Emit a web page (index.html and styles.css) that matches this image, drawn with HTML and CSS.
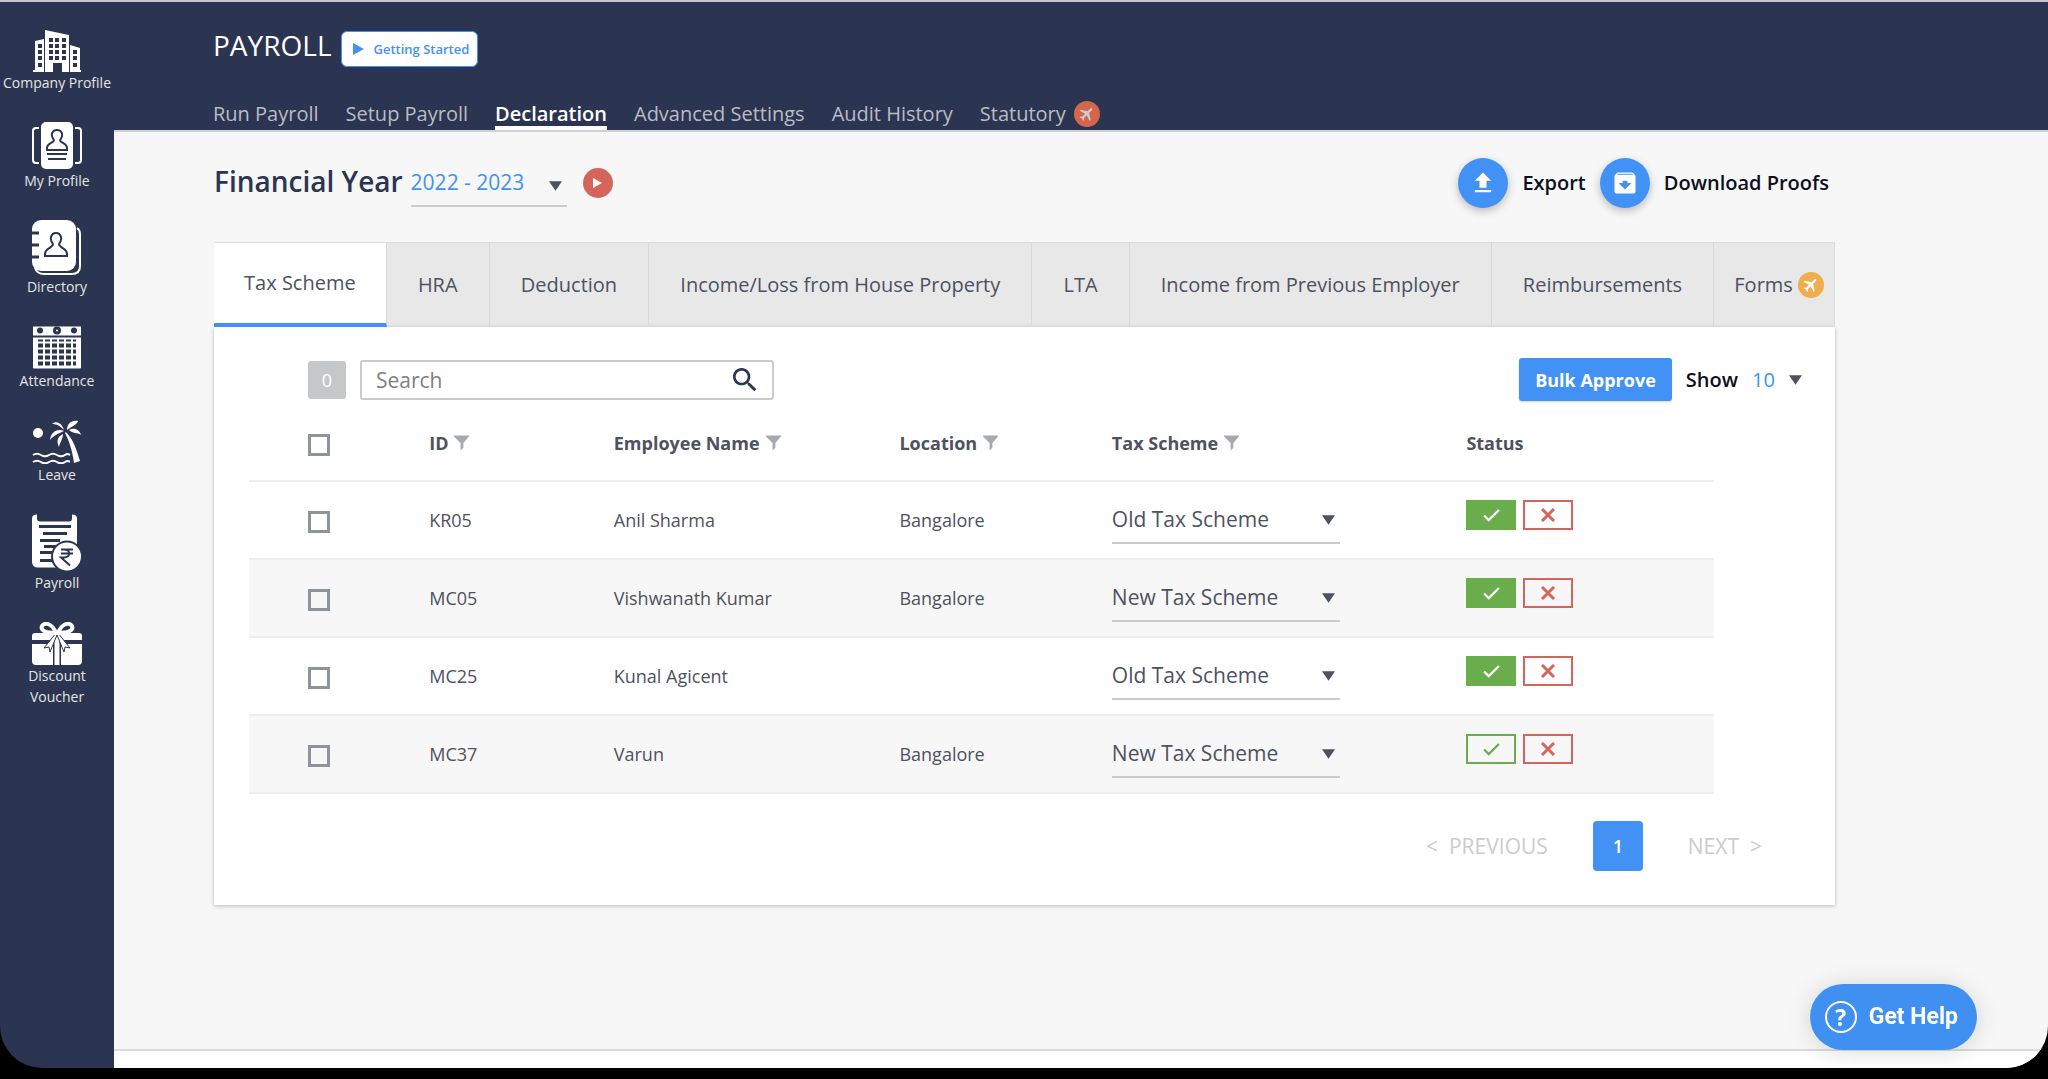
FILE: index.html
```html
<!DOCTYPE html>
<html lang="en">
<head>
<meta charset="utf-8">
<title>Payroll</title>
<link rel="stylesheet" href="styles.css">
</head>
<body>
<svg class="sprite" aria-hidden="true">
  <symbol id="plane" viewBox="0 0 24 24"><path transform="rotate(45 12 12)" d="M21 16v-2l-8-5V3.500c0-.83-.67-1.500-1.500-1.500S10 2.670 10 3.500V9l-8 5v2l8-2.500V19l-2 1.500V22l3.500-1 3.500 1v-1.500L13 19v-5.500l8 2.500z"/></symbol>
  <symbol id="funnel" viewBox="0 0 16 16"><path d="M0 0h16v1l-6 7v5l-3 3V8L0 1z"/></symbol>
  <symbol id="caret" viewBox="0 0 14 10"><path d="M0 0h14L7 10z"/></symbol>
  <symbol id="check" viewBox="0 0 18 14"><path d="M1 7l5 5L17 1" fill="none" stroke="currentColor" stroke-width="2.400"/></symbol>
  <symbol id="cross" viewBox="0 0 14 14"><path d="M1 1l12 12M13 1L1 13" fill="none" stroke="currentColor" stroke-width="3"/></symbol>
</svg>
<div class="window">
  <nav class="sidebar" aria-label="Modules">
    <a href="#" class="module">
      <svg width="48" height="42" viewBox="0 0 48 42"><path fill="#fff" d="M0 42v-2h2V11l9-2v33zM12 0l24 5v37h-7v-9h-9v9h-8zM37 15l10 3v22h1v2H37z"/><g fill="#2b3551"><path d="M5 14h4v4H5zM5 20h4v4H5zM5 26h4v4H5zM5 33h4v4H5zM16 8h4v4h-4zM22 8h4v4h-4zM29 8h4v4h-4zM16 14h4v4h-4zM22 14h4v4h-4zM29 14h4v4h-4zM16 20h4v4h-4zM22 20h4v4h-4zM29 20h4v4h-4zM16 26h4v4h-4zM22 26h4v4h-4zM29 26h4v4h-4zM40 20h4v4h-4zM40 26h4v4h-4zM40 33h4v4h-4z"/></g></svg>
      <span>Company Profile</span>
    </a>
    <a href="#" class="module">
      <svg width="50" height="48" viewBox="0 0 50 48"><path d="M7 6H4q-3 0-3 3v29q0 3 3 3h3M43 6h3q3 0 3 3v29q0 3-3 3h-3" fill="none" stroke="#fff" stroke-width="2"/><rect x="9" y="0" width="32" height="47" rx="5" fill="#fff"/><g fill="none" stroke="#2b3551" stroke-width="2"><path d="M22 18c-4-5-2-10 3-10s7 5 3 10c0 3 7 3 7 8v2H15v-2c0-5 7-5 7-8z"/><path d="M15 32h20M16 37h18"/></g></svg>
      <span>My Profile</span>
    </a>
    <a href="#" class="module">
      <svg width="50" height="56" viewBox="0 0 50 56"><path d="M45 8q3 2 3 6v32q0 8-8 8H12q-7 0-9-6" fill="none" stroke="#fff" stroke-width="2"/><rect width="44" height="51" rx="9" fill="#fff"/><path d="M0 13h7M0 25h7M0 37h7" stroke="#2b3551" stroke-width="3"/><path d="M21 24c-4-5-2-11 3-11s7 6 3 11c0 4 8 4 8 10v2H13v-2c0-6 8-6 8-10z" fill="none" stroke="#2b3551" stroke-width="2"/></svg>
      <span>Directory</span>
    </a>
    <a href="#" class="module">
      <svg width="50" height="44" viewBox="0 0 50 43"><path fill="#fff" d="M1 0h48v9H1zM1 11h48v30q0 1-1 1H2q-1 0-1-1z"/><g fill="#2b3551"><circle cx="8" cy="4" r="3"/><circle cx="25" cy="4" r="4"/><circle cx="42" cy="4" r="3"/></g><circle cx="25" cy="4" r="1" fill="#fff"/><path d="M6 14h38" stroke="#2b3551" stroke-width="2" stroke-dasharray="5 2"/><path d="M6 19h38M6 25h38M6 31h38M6 37h38" stroke="#2b3551" stroke-width="4" stroke-dasharray="5 2"/></svg>
      <span>Attendance</span>
    </a>
    <a href="#" class="module">
      <svg width="50" height="44" viewBox="0 0 50 44"><g fill="#fff"><circle cx="6" cy="13" r="5"/><path d="M34 12c4 5 8 8 14 29l-6 2c-2-14-5-22-9-30z"/><path d="M32 10C30 3 24 0 20 4c5 0 8 2 12 6zM32 11c-7-3-13 1-14 9 4-5 8-6 14-9zM31 14c-5 2-7 7-4 13 1-5 4-8 4-13zM35 10c0-6 4-10 11-9-1 4-6 5-11 9zM37 10c5-3 11 0 12 5-4-3-8-1-12-5z"/></g><path d="M1 35c3-2 5-2 8 0s5 2 8 0 5-2 8 0 5 2 8 0 3-1 5 0M1 42c3-2 5-2 8 0s5 2 8 0 5-2 8 0 5 2 8 0 3-1 5 0" fill="none" stroke="#fff" stroke-width="2"/></svg>
      <span>Leave</span>
    </a>
    <a href="#" class="module">
      <svg width="50" height="58" viewBox="0 0 50 57"><path fill="#fff" d="M0 4q0-4 5-4v4q0 3 3 3h29q3 0 3-3V0q5 0 5 4v40H30v9H6q-6 0-6-6z"/><path d="M7 12h32M11 19h24M8 26h20M12 32h14M8 38h14M8 46h14" stroke="#2b3551" stroke-width="3"/><circle cx="35" cy="42" r="15" fill="#fff" stroke="#2b3551" stroke-width="2"/><path d="M29 35h12M29 39h12M29 35h3c7 0 7 8 0 8h-3l9 8" fill="none" stroke="#2b3551" stroke-width="2"/></svg>
      <span>Payroll</span>
    </a>
    <a href="#" class="module">
      <svg width="50" height="43" viewBox="0 0 50 43"><path fill="#fff" d="M0 18v-4q0-3 3-3h44q3 0 3 3v4zM0 22h50v17q0 4-4 4H4q-4 0-4-4z"/><path d="M25 14v30" stroke="#2b3551" stroke-width="8"/><path d="M25 12v31" stroke="#fff" stroke-width="5"/><path d="M24 11l-12 15 5-1 1 5 7-17zM26 11l12 15-5-1-1 5-7-17z" fill="#fff" stroke="#2b3551"/><path d="M24 11C20 1 13 0 10 4c-2 5 5 7 14 7zM26 11C30 1 37 0 40 4c2 5-5 7-14 7z" fill="#2b3551" stroke="#fff" stroke-width="4"/></svg>
      <span>Discount Voucher</span>
    </a>
  </nav>
  <div class="main">
    <header class="header">
      <div class="title-row">
        <h1>PAYROLL</h1>
        <button type="button" class="getting-started"><svg width="11" height="12" viewBox="0 0 11 12"><path d="M0 0l11 6-11 6z" fill="currentColor"/></svg>Getting Started</button>
      </div>
      <nav class="subnav" aria-label="Payroll">
        <a href="#">Run Payroll</a>
        <a href="#">Setup Payroll</a>
        <a href="#" class="current">Declaration</a>
        <a href="#">Advanced Settings</a>
        <a href="#">Audit History</a>
        <a href="#">Statutory<span class="plane-badge"><svg width="18" height="18"><use href="#plane"/></svg></span></a>
      </nav>
    </header>
    <main class="content">
      <div class="year-row">
        <label class="year-label" for="year">Financial Year</label>
        <span class="select year-select"><select id="year"><option>2022 - 2023</option></select><svg width="13" height="10"><use href="#caret"/></svg></span>
        <button type="button" class="play" aria-label="Play video"><svg width="9" height="10" viewBox="0 0 9 10"><path d="M0 0l9 5-9 5z" fill="#fff"/></svg></button>
        <div class="actions">
          <button type="button" class="action"><span class="round"><svg width="28" height="28" viewBox="0 0 24 24"><path d="M9 16h6v-6h4l-7-7-7 7h4zM5 18h14v2H5z"/></svg></span>Export</button>
          <button type="button" class="action"><span class="round"><svg width="28" height="28" viewBox="0 0 24 24"><path d="M20.540 5.230l-1.390-1.680C18.880 3.210 18.470 3 18 3H6c-.47 0-.88.21-1.160.55L3.460 5.230C3.170 5.570 3 6.020 3 6.500V19c0 1.100.9 2 2 2h14c1.100 0 2-.9 2-2V6.500c0-.48-.17-.93-.46-1.270zM12 17.500L6.500 12H10v-2h4v2h3.500L12 17.500zM5.120 5l.81-1h12l.94 1H5.120z"/></svg></span>Download Proofs</button>
        </div>
      </div>
      <div class="tabs">
        <button type="button" class="tab active">Tax Scheme</button>
        <button type="button" class="tab">HRA</button>
        <button type="button" class="tab">Deduction</button>
        <button type="button" class="tab">Income/Loss from House Property</button>
        <button type="button" class="tab">LTA</button>
        <button type="button" class="tab">Income from Previous Employer</button>
        <button type="button" class="tab">Reimbursements</button>
        <button type="button" class="tab forms">Forms<span class="plane-badge amber"><svg width="18" height="18"><use href="#plane"/></svg></span></button>
      </div>
      <section class="card">
        <div class="toolbar">
          <span class="count">0</span>
          <div class="search">
            <input type="search" placeholder="Search" aria-label="Search">
            <button type="button" aria-label="Search"><svg width="32" height="32" viewBox="0 0 24 24"><path d="M15.500 14h-.79l-.28-.27C15.410 12.590 16 11.110 16 9.500 16 5.910 13.090 3 9.500 3S3 5.910 3 9.500 5.910 16 9.500 16c1.610 0 3.090-.59 4.230-1.570l.27.28v.79l5 4.990L20.490 19l-4.990-5zm-6 0C7.010 14 5 11.990 5 9.500S7.010 5 9.500 5 14 7.010 14 9.500 11.990 14 9.500 14z"/></svg></button>
          </div>
          <button type="button" class="bulk">Bulk Approve</button>
          <label class="show" for="show">Show</label>
          <span class="select show-select"><select id="show"><option>10</option></select><svg width="13" height="10"><use href="#caret"/></svg></span>
        </div>
        <table class="declarations">
          <colgroup><col class="c-check"><col class="c-id"><col class="c-name"><col class="c-location"><col class="c-scheme"><col class="c-status"></colgroup>
          <thead>
            <tr>
              <th class="tick"><input type="checkbox" aria-label="Select all"></th>
              <th>ID<button type="button" class="filter" aria-label="Filter ID"><svg width="15" height="16"><use href="#funnel"/></svg></button></th>
              <th>Employee Name<button type="button" class="filter" aria-label="Filter name"><svg width="15" height="16"><use href="#funnel"/></svg></button></th>
              <th>Location<button type="button" class="filter" aria-label="Filter location"><svg width="15" height="16"><use href="#funnel"/></svg></button></th>
              <th>Tax Scheme<button type="button" class="filter" aria-label="Filter tax scheme"><svg width="15" height="16"><use href="#funnel"/></svg></button></th>
              <th>Status</th>
            </tr>
          </thead>
          <tbody>
            <tr>
              <td class="tick"><input type="checkbox" aria-label="Select KR05"></td>
              <td>KR05</td><td>Anil Sharma</td><td>Bangalore</td>
              <td><span class="select scheme"><select aria-label="Tax scheme of Anil Sharma"><option>Old Tax Scheme</option></select><svg width="13" height="10"><use href="#caret"/></svg></span></td>
              <td class="status"><div class="decide"><button type="button" class="approve on" aria-label="Approve"><svg width="17" height="13"><use href="#check"/></svg></button><button type="button" class="reject" aria-label="Reject"><svg width="14" height="14"><use href="#cross"/></svg></button></div></td>
            </tr>
            <tr>
              <td class="tick"><input type="checkbox" aria-label="Select MC05"></td>
              <td>MC05</td><td>Vishwanath Kumar</td><td>Bangalore</td>
              <td><span class="select scheme"><select aria-label="Tax scheme of Vishwanath Kumar"><option>New Tax Scheme</option></select><svg width="13" height="10"><use href="#caret"/></svg></span></td>
              <td class="status"><div class="decide"><button type="button" class="approve on" aria-label="Approve"><svg width="17" height="13"><use href="#check"/></svg></button><button type="button" class="reject" aria-label="Reject"><svg width="14" height="14"><use href="#cross"/></svg></button></div></td>
            </tr>
            <tr>
              <td class="tick"><input type="checkbox" aria-label="Select MC25"></td>
              <td>MC25</td><td>Kunal Agicent</td><td></td>
              <td><span class="select scheme"><select aria-label="Tax scheme of Kunal Agicent"><option>Old Tax Scheme</option></select><svg width="13" height="10"><use href="#caret"/></svg></span></td>
              <td class="status"><div class="decide"><button type="button" class="approve on" aria-label="Approve"><svg width="17" height="13"><use href="#check"/></svg></button><button type="button" class="reject" aria-label="Reject"><svg width="14" height="14"><use href="#cross"/></svg></button></div></td>
            </tr>
            <tr>
              <td class="tick"><input type="checkbox" aria-label="Select MC37"></td>
              <td>MC37</td><td>Varun</td><td>Bangalore</td>
              <td><span class="select scheme"><select aria-label="Tax scheme of Varun"><option>New Tax Scheme</option></select><svg width="13" height="10"><use href="#caret"/></svg></span></td>
              <td class="status"><div class="decide"><button type="button" class="approve" aria-label="Approve"><svg width="17" height="13"><use href="#check"/></svg></button><button type="button" class="reject" aria-label="Reject"><svg width="14" height="14"><use href="#cross"/></svg></button></div></td>
            </tr>
          </tbody>
        </table>
        <div class="pager">
          <button type="button" class="step"><span>&lt;</span>PREVIOUS</button>
          <button type="button" class="page">1</button>
          <button type="button" class="step">NEXT<span>&gt;</span></button>
        </div>
      </section>
    </main>
    <footer class="footer"></footer>
  </div>
</div>
<button type="button" class="help"><span class="help-icon">?</span>Get Help</button>
</body>
</html>
```
FILE: styles.css
```css
* { box-sizing: border-box; }
body {
  margin: 0;
  background: #000;
  color: #4d525f;
  font-family: "Open Sans", "Noto Sans", sans-serif;
  font-size: 18px;
  line-height: 24px;
}
button, input, select { font: inherit; color: inherit; }
button { padding: 0; border: 0; background: none; cursor: pointer; }
a { color: inherit; text-decoration: none; }
svg { display: block; fill: currentColor; }
.sprite { display: none; }

.window {
  display: flex;
  min-height: calc(100vh - 11px);
  border-top: 2px solid #c3c8ce;
  border-radius: 0 0 42px 42px;
  background: #2b3551;
  overflow: hidden;
}
.sidebar {
  flex: none;
  width: 114px;
  display: flex;
  flex-direction: column;
  gap: 29px;
  padding-top: 28px;
  color: #e4e4e4;
  font-size: 14px;
  line-height: 21px;
  text-align: center;
}
.module {
  display: flex;
  flex-direction: column;
  align-items: center;
}
.module span { max-width: 112px; }
.module:last-child span { max-width: 80px; }

.main {
  flex: 1;
  min-width: 0;
  display: flex;
  flex-direction: column;
  background: #f7f7f7;
}
.header {
  padding: 29px 99px 0;
  background: #2b3551;
  border-bottom: 2px solid #cfd1d6;
}
.title-row {
  display: flex;
  align-items: flex-start;
  gap: 9px;
}
h1 {
  margin: 0;
  color: #fff;
  font-size: 28px;
  font-weight: 400;
  line-height: 28px;
}
.getting-started {
  display: flex;
  align-items: center;
  gap: 10px;
  height: 36px;
  padding: 0 8px 0 11px;
  border: 1px solid #4292f5;
  border-radius: 6px;
  background: #fff;
  color: #4292f5;
  font-size: 13px;
  font-weight: 600;
}
.subnav {
  display: flex;
  gap: 27px;
  margin-top: 32px;
  color: #b9bcc4;
  font-size: 20px;
  line-height: 28px;
}
.subnav a {
  display: flex;
  align-items: center;
  gap: 8px;
  height: 31px;
  padding-top: 2px;
  border-bottom: 4px solid transparent;
}
.subnav .current {
  border-color: #fff;
  color: #fff;
  font-weight: 600;
}
.plane-badge {
  display: grid;
  place-items: center;
  width: 26px;
  height: 26px;
  border-radius: 50%;
  background: #d5664e;
  color: #c9cdd2;
}
.plane-badge.amber { background: #f0ad4e; color: #fff; }

.content {
  flex: 1;
  padding: 20px 213px 0 100px;
}
.year-row {
  display: flex;
  align-items: center;
  height: 62px;
}
.year-label {
  color: #2b3551;
  font-size: 28px;
  font-weight: 600;
  line-height: 36px;
  padding-bottom: 4px;
}
.select {
  position: relative;
  display: inline-block;
}
.select select {
  width: 100%;
  border: 0;
  padding: 0;
  background: none;
  appearance: none;
  outline: 0;
}
.select svg {
  position: absolute;
  right: 5px;
  top: 50%;
  margin-top: -5px;
  pointer-events: none;
}
.year-select { width: 156px; margin-left: 8px; }
.year-select select {
  height: 48px;
  border-bottom: 2px solid #ccc;
  color: #4292f5;
  font-size: 21px;
}
.year-select svg { margin-top: -2px; }
.play {
  display: grid;
  place-items: center;
  width: 30px;
  height: 30px;
  margin-left: 16px;
  border-radius: 50%;
  background: #d5655a;
}
.actions {
  display: flex;
  gap: 14px;
  margin-left: auto;
  padding-right: 6px;
}
.action {
  display: flex;
  align-items: center;
  gap: 14px;
  color: #0c0f1c;
  font-size: 20px;
  font-weight: 600;
}
.round {
  display: grid;
  place-items: center;
  width: 50px;
  height: 50px;
  border-radius: 50%;
  background: #4292f5;
  color: #fff;
  box-shadow: 0 3px 8px rgba(0, 0, 0, .25);
}
.tabs {
  display: flex;
  height: 85px;
  margin-top: 28px;
  border-top: 1px solid #dcdcdc;
  background: #e8e8e8;
}
.tab {
  flex: 1 0 auto;
  display: flex;
  align-items: center;
  justify-content: center;
  gap: 5px;
  padding: 0 31px;
  border-right: 1px solid #dadada;
  font-size: 20px;
}
.tab.active {
  padding: 0 30px;
  border-bottom: 4px solid #4292f5;
  background: #fff;
}
.tab.forms { padding: 0 10px 0 20px; }

.card {
  padding-bottom: 34px;
  background: #fff;
  box-shadow: 0 1px 4px rgba(0, 0, 0, .25);
}
.toolbar {
  display: flex;
  align-items: center;
  padding: 31px 33px 0 94px;
}
.count {
  width: 38px;
  height: 38px;
  border-radius: 3px;
  background: #c6c7c9;
  color: #fff;
  line-height: 38px;
  text-align: center;
}
.search {
  display: flex;
  align-items: center;
  width: 414px;
  height: 40px;
  margin-left: 14px;
  padding: 0 11px 0 14px;
  border: 2px solid #ccc;
  border-radius: 3px;
  color: #2b3551;
}
.search input {
  flex: 1;
  min-width: 0;
  padding: 0;
  border: 0;
  outline: 0;
  background: none;
  font-size: 21px;
}
.search input::placeholder { color: #808080; opacity: 1; }
.bulk {
  height: 43px;
  margin-left: auto;
  padding: 0 16px;
  border-radius: 3px;
  background: #4292f5;
  color: #fff;
  font-weight: 700;
  box-shadow: 0 1px 2px rgba(0, 0, 0, .15);
}
.show {
  margin-left: 14px;
  color: #0c0f1c;
  font-size: 20px;
  font-weight: 600;
}
.show-select { width: 50px; margin-left: 14px; }
.show-select select { color: #4292f5; font-size: 20px; }
.show-select svg { right: 0; }

.declarations {
  width: calc(100% - 156px);
  margin-left: 35px;
  border-collapse: collapse;
  table-layout: fixed;
}
.c-check { width: 12.3%; }
.c-id { width: 12.6%; }
.c-name { width: 19.5%; }
.c-location { width: 14.5%; }
.c-scheme { width: 24.2%; }
.c-status { width: 16.9%; }
.declarations th, .declarations td {
  padding: 0;
  border-bottom: 2px solid #eee;
  text-align: left;
}
.declarations th {
  height: 80px;
  padding-top: 4px;
  font-weight: 700;
}
.declarations td { height: 78px; }
.declarations tbody tr:nth-child(even) { background: #f7f7f7; }
.declarations td.tick { padding: 3px 0 0 59px; }
.declarations th.tick { padding: 9px 0 0 59px; }
.tick input {
  display: block;
  width: 22px;
  height: 22px;
  margin: 0;
  border: 3px solid #8f939a;
  appearance: none;
}
.filter {
  margin-left: 6px;
  color: #a6a9af;
  vertical-align: -1px;
}
.scheme { width: 228px; }
.scheme select {
  height: 47px;
  border-bottom: 2px solid #ccc;
  font-size: 21px;
}
.declarations .status {
  padding-top: 18px;
  vertical-align: top;
}
.decide { display: flex; gap: 7px; }
.approve, .reject {
  display: grid;
  place-items: center;
  width: 50px;
  height: 30px;
  border: 2px solid #6aad4d;
  color: #6aad4d;
}
.approve.on { background: #6aad4d; color: #fff; }
.reject { border-color: #d5655a; color: #d5655a; }

.pager {
  display: flex;
  align-items: center;
  justify-content: flex-end;
  gap: 45px;
  padding: 27px 73px 0 0;
}
.step {
  display: flex;
  gap: 11px;
  color: #ccc;
  font-size: 21px;
}
.page {
  width: 50px;
  height: 50px;
  border-radius: 4px;
  background: #4292f5;
  color: #fff;
  font-weight: 600;
}
.footer {
  height: 19px;
  border-top: 2px solid #dcdcdc;
  background: #fff;
}
.help {
  position: fixed;
  right: 71px;
  bottom: 29px;
  display: flex;
  align-items: center;
  gap: 12px;
  height: 66px;
  padding: 0 19px 0 15px;
  border-radius: 33px;
  background: #4090f2;
  color: #fff;
  font-family: Roboto, sans-serif;
  font-size: 23px;
  font-weight: 700;
  box-shadow: 0 2px 24px rgba(0, 0, 0, .15);
}
.help-icon {
  width: 32px;
  height: 32px;
  border: 2px solid #fff;
  border-radius: 50%;
  font-family: "Open Sans", sans-serif;
  line-height: 28px;
}
```
